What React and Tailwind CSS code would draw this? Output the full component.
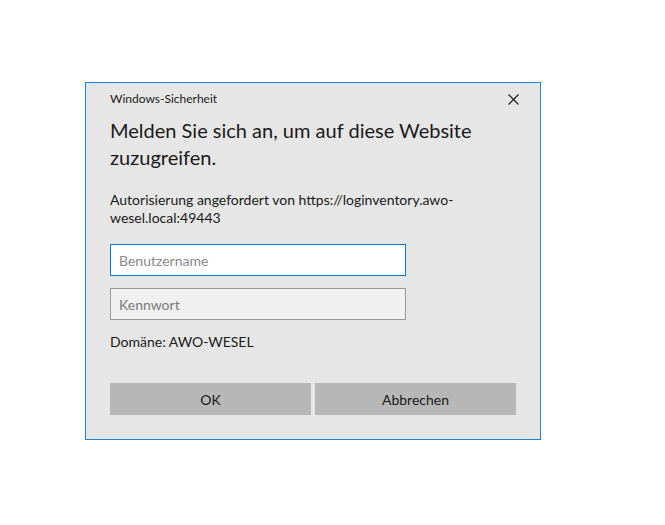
import React, { useState } from 'react';

const font = { fontFamily: '"Segoe UI", Lato, "Noto Sans", sans-serif' };

const App = () => {
    const [user, setUser] = useState('');
    const [pass, setPass] = useState('');

    return (
        <div className="min-h-[525px] w-[665px] bg-white pt-[82px] pl-[85px]" style={font}>
            <div className="w-[456px] h-[358px] border border-[#1883d7] bg-[#e6e6e6] pl-[24px] pr-[23px]">
                <div className="flex items-center justify-between mt-[8px] h-[16px]">
                    <span className="text-[12px] leading-[16px] text-[#1a1a1a]">Windows-Sicherheit</span>
                    <button className="mr-[-8px] w-[24px] h-[16px] flex items-center justify-center text-[#1a1a1a]">
                        <svg width="11" height="11" viewBox="0 0 11 11" fill="none" stroke="currentColor" strokeWidth="1.1">
                            <path d="M0.5 0.5 L10.5 10.5 M10.5 0.5 L0.5 10.5" />
                        </svg>
                    </button>
                </div>

                <h1 className="mt-[10px] text-[20px] leading-[27px] text-[#1a1a1a] font-normal">
                    <span className="block">Melden Sie sich an, um auf diese Website</span>
                    <span className="block">zuzugreifen.</span>
                </h1>

                <p className="mt-[20px] text-[14px] leading-[18px] text-[#1a1a1a]">
                    <span className="block">Autorisierung angefordert von https://loginventory.awo-</span>
                    <span className="block">wesel.local:49443</span>
                </p>

                <input
                    type="text"
                    autoFocus
                    placeholder="Benutzername"
                    value={user}
                    onChange={e => setUser(e.target.value)}
                    className="mt-[17px] block w-[296px] h-[32px] border border-[#0078d7] bg-white px-[8px] text-[14px] text-[#1a1a1a] placeholder:text-[#8a8a8a] outline-none"
                />
                <input
                    type="password"
                    placeholder="Kennwort"
                    value={pass}
                    onChange={e => setPass(e.target.value)}
                    className="mt-[12px] block w-[296px] h-[32px] border border-[#999999] bg-[#f0f0f0] px-[8px] text-[14px] text-[#1a1a1a] placeholder:text-[#7a7a7a] outline-none"
                />

                <div className="mt-[13px] text-[14px] leading-[18px] text-[#1a1a1a]">Domäne: AWO-WESEL</div>

                <div className="mt-[32px] flex gap-[4px]">
                    <button className="w-[201px] h-[32px] bg-[#b7b7b7] text-[14px] text-[#1a1a1a]">OK</button>
                    <button className="w-[201px] h-[32px] bg-[#b7b7b7] text-[14px] text-[#1a1a1a]">Abbrechen</button>
                </div>
            </div>
        </div>
    );
};

export default App;
